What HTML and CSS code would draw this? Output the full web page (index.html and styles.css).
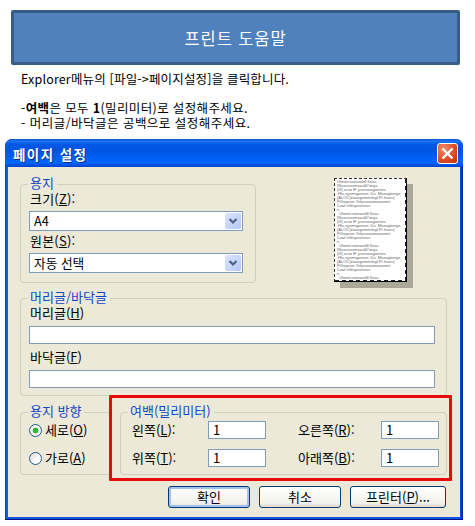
FILE: index.html
```html
<!DOCTYPE html>
<html lang="ko">
<head>
<meta charset="utf-8">
<title>프린트 도움말</title>
<link rel="stylesheet" href="styles.css">
</head>
<body>
<header class="banner"><h1>프린트 도움말</h1></header>
<section class="help">
  <p class="l1">Explorer메뉴의 [파일-&gt;페이지설정]을 클릭합니다.</p>
  <p class="l2">-<b>여백</b>은 모두 <b>1</b>(밀리미터)로 설정해주세요.</p>
  <p class="l3">- 머리글/바닥글은 공백으로 설정해주세요.</p>
</section>
<main class="dialog">
  <div class="titlebar">
    <span class="title">페이지 설정</span>
    <button class="close" aria-label="닫기"><svg width="21" height="21" viewBox="0 0 21 21"><path d="M5.5 5.5l10 10M15.5 5.5l-10 10" stroke="#fff" stroke-width="2.3"/></svg></button>
  </div>
  <div class="client">
    <div class="top">
      <section class="group paper">
        <h2>용지</h2>
        <div class="label">크기(<u>Z</u>):</div>
        <div class="select"><span>A4</span><i><svg width="16" height="16"><path d="M4.5 6l3.5 3.5L11.5 6" fill="none" stroke="#4d6185" stroke-width="2.2"/></svg></i></div>
        <div class="label">원본(<u>S</u>):</div>
        <div class="select"><span>자동 선택</span><i><svg width="16" height="16"><path d="M4.5 6l3.5 3.5L11.5 6" fill="none" stroke="#4d6185" stroke-width="2.2"/></svg></i></div>
      </section>
      <div class="sheet"><pre>Ulwnersonvoaldl Ilasu,
Nlascrosonvoaldl Ireya
(III) arso IF ysnisaregonnes
 Hlu sysmrganeer: Du. Mosaigtenye
(ALOC)eoangementoyl FI Inosu)
FIGoyssn: Ihfarasoumsoosmn
Coaf ntferpostreas:
n
  Ulwnersonvoaldl Ilasu,
Nlascrosonvoaldl Ireya
(III) arso IF ysnisaregonnes
 Hlu sysmrganeer: Du. Mosaigtenye
(ALOC)eoangementoyl FI Inosu)
FIGoyssn: Ihfarasoumsoosmn
Coaf ntferpostreas:
n
  Ulwnersonvoaldl Ilasu,
Nlascrosonvoaldl Ireya
(III) arso IF ysnisaregonnes
 Hlu sysmrganeer: Du. Mosaigtenye
(ALOC)eoangementoyl FI Inosu)
FIGoyssn: Ihfarasoumsoosmn
Coaf ntferpostreas:
n
  Ulwnersonvoaldl Ilasu,</pre></div>
    </div>
    <section class="group headfoot">
      <h2>머리글/바닥글</h2>
      <div class="label">머리글(<u>H</u>)</div>
      <div class="field"></div>
      <div class="label second">바닥글(<u>F</u>)</div>
      <div class="field"></div>
    </section>
    <div class="bottom">
      <section class="group orient">
        <h2>용지 방향</h2>
        <div class="radio"><i class="on"></i><span>세로(<u>O</u>)</span></div>
        <div class="radio"><i></i><span>가로(<u>A</u>)</span></div>
      </section>
      <section class="group margins">
        <h2>여백(밀리미터)</h2>
        <span>왼쪽(<u>L</u>):</span><div class="field">1</div><span>오른쪽(<u>R</u>):</span><div class="field">1</div>
        <span>위쪽(<u>T</u>):</span><div class="field">1</div><span>아래쪽(<u>B</u>):</span><div class="field">1</div>
      </section>
      <div class="highlight"></div>
    </div>
    <div class="buttons">
      <button class="btn default">확인</button>
      <button class="btn">취소</button>
      <button class="btn wide">프린터(<u>P</u>)...</button>
    </div>
  </div>
</main>
</body>
</html>
```
FILE: styles.css
```css
* { box-sizing: border-box; }
body {
  margin: 0;
  width: 475px;
  height: 526px;
  padding: 10px 0 0;
  overflow: hidden;
  background: #fff;
  color: #000;
  font: 13px/16px "Noto Sans CJK KR", sans-serif;
}
h1, h2, p, pre { margin: 0; font-weight: normal; }
i { font-style: normal; }
u { text-underline-offset: 1px; text-decoration-thickness: 1px; }
button { font: inherit; color: inherit; padding: 0; }

.banner {
  width: 449px;
  height: 55px;
  margin-left: 11px;
  display: flex;
  align-items: center;
  justify-content: center;
  background: #4f81bd;
  border: 3px solid #385d8a;
  border-radius: 2px;
  color: #fff;
}
.banner h1 { font-size: 16.5px; line-height: 20px; letter-spacing: 0.9px; }

.help { height: 74px; padding: 7px 0 0 21px; line-height: 14.5px; font-size: 12.5px; white-space: nowrap; }
.l1 { margin-bottom: 14.5px; letter-spacing: 0.17px; }
.l2 { letter-spacing: 0.36px; }
.l3 { letter-spacing: 0.47px; }

.dialog {
  width: 458px;
  height: 381px;
  margin-left: 5px;
  padding: 0 3px 3px;
  background: linear-gradient(90deg, #0831d9, #166aee 2px, #0855dd 3px, #0855dd 455px, #0040d0 456px, #001ea0);
  border-bottom: 1px solid #00138c;
  border-radius: 7px 7px 0 0;
}
.titlebar {
  height: 28px;
  margin: 0 -3px;
  padding: 1px 5px 0 8px;
  display: flex;
  align-items: center;
  justify-content: space-between;
  border-radius: 7px 7px 0 0;
  background: linear-gradient(#0a4fc8 0, #1b77f3 2px, #0558e5 5px, #0054e3 12px, #0062fa 21px, #0064ff 24px, #0041c8 28px);
}
.title { color: #fff; font-size: 13.5px; font-weight: bold; letter-spacing: 1.4px; text-shadow: 1px 1px #0a2a86; }
.close {
  width: 21px;
  height: 21px;
  border: 1px solid #fff;
  border-radius: 3px;
  background: radial-gradient(circle at 30% 25%, #ee8b6c, #dd4a26 60%, #bd2f0b);
}
.close svg { display: block; margin: -1px; }

.client { height: 350px; padding: 11px 13px 0 12px; background: #ece9d8; }
.group { position: relative; border: 1px solid #d0d0bf; border-radius: 4px; }
.group h2 {
  position: absolute;
  left: 7px;
  top: -11px;
  padding: 0 3px 0 2px;
  font-size: 13px;
  line-height: 18px;
  background: #ece9d8;
  color: #0f46c8;
  white-space: nowrap;
}
.top { display: flex; height: 120px; }
.paper { width: 236px; height: 99px; margin-top: 6px; padding: 6px 0 0 8px; }
.paper .label { height: 20px; line-height: 16px; padding-left: 1px; letter-spacing: 0.2px; }
.paper .select + .label { height: 22px; line-height: 19px; }
.select {
  width: 214px;
  height: 20px;
  padding: 0 1px 0 4px;
  display: flex;
  align-items: center;
  justify-content: space-between;
  background: #fff;
  border: 1px solid #7f9db9;
}
.select span { font-size: 12.7px; }
.select i { width: 16px; height: 16px; border-radius: 2px; background: linear-gradient(135deg, #dbe5fe, #b4c8f6); }
.select svg { display: block; }

.sheet {
  width: 73px;
  height: 104px;
  margin-left: 78px;
  overflow: hidden;
  border: 1px dashed #333;
  border-right: 1px solid #000;
  border-bottom: 1px solid #000;
  background:
    repeating-linear-gradient(#222 0 4px, #fff 4px 7px) right / 1px 100% no-repeat,
    repeating-linear-gradient(90deg, #222 0 4px, #fff 4px 7px) bottom / 100% 1px no-repeat,
    #fff;
  box-shadow: 6px 6px #aca899;
}
.sheet pre { padding: 1px 0 0 2px; font: 4px/4px "Liberation Sans", sans-serif; color: #666; }

.headfoot { height: 98px; padding: 6px 0 0 8px; }
.headfoot .label { height: 21px; line-height: 16px; padding-left: 1px; }
.headfoot .second { height: 26px; line-height: 26px; }
.field { height: 18px; padding-left: 4px; line-height: 16px; background: #fff; border: 1px solid #7f9db9; }
.headfoot .field { width: 406px; }

.bottom { position: relative; display: flex; height: 79px; padding-top: 16px; }
.orient { width: 92px; height: 63px; padding: 8px 0 0 8px; }
.radio { height: 28px; display: flex; align-items: flex-start; line-height: 17px; }
.radio i { width: 13px; height: 13px; margin: 3px 3px 0 0; border: 1px solid #21598b; border-radius: 50%; background: linear-gradient(135deg, #dcdcd7, #fff 70%); }
.radio .on { background: radial-gradient(circle, #35b835 0 2px, #21a121 2.5px, #f4f4f2 3.2px); }
.margins {
  width: 327px;
  height: 63px;
  margin-left: 8px;
  padding: 8px 0 0 11px;
  display: grid;
  grid-template-columns: 76px 58px 115px 58px;
  grid-template-rows: 28px 28px;
}
.margins > span { line-height: 17px; }
.margins > span:nth-of-type(even) { padding-left: 32px; white-space: nowrap; }
.highlight { position: absolute; left: 89px; top: -1px; width: 343px; height: 86px; border: 3px solid #e80c08; border-radius: 1px; }

.buttons { display: flex; justify-content: flex-end; gap: 9px; padding: 11px 1px 0 0; }
.btn { width: 82px; height: 22px; line-height: 18px; border: 1px solid #003c74; border-radius: 3px; background: linear-gradient(#fff, #f2f2ec 80%, #dcd8cb); }
.default { box-shadow: inset 0 0 0 2px #a4bff0; }
.wide { width: 96px; }
```
